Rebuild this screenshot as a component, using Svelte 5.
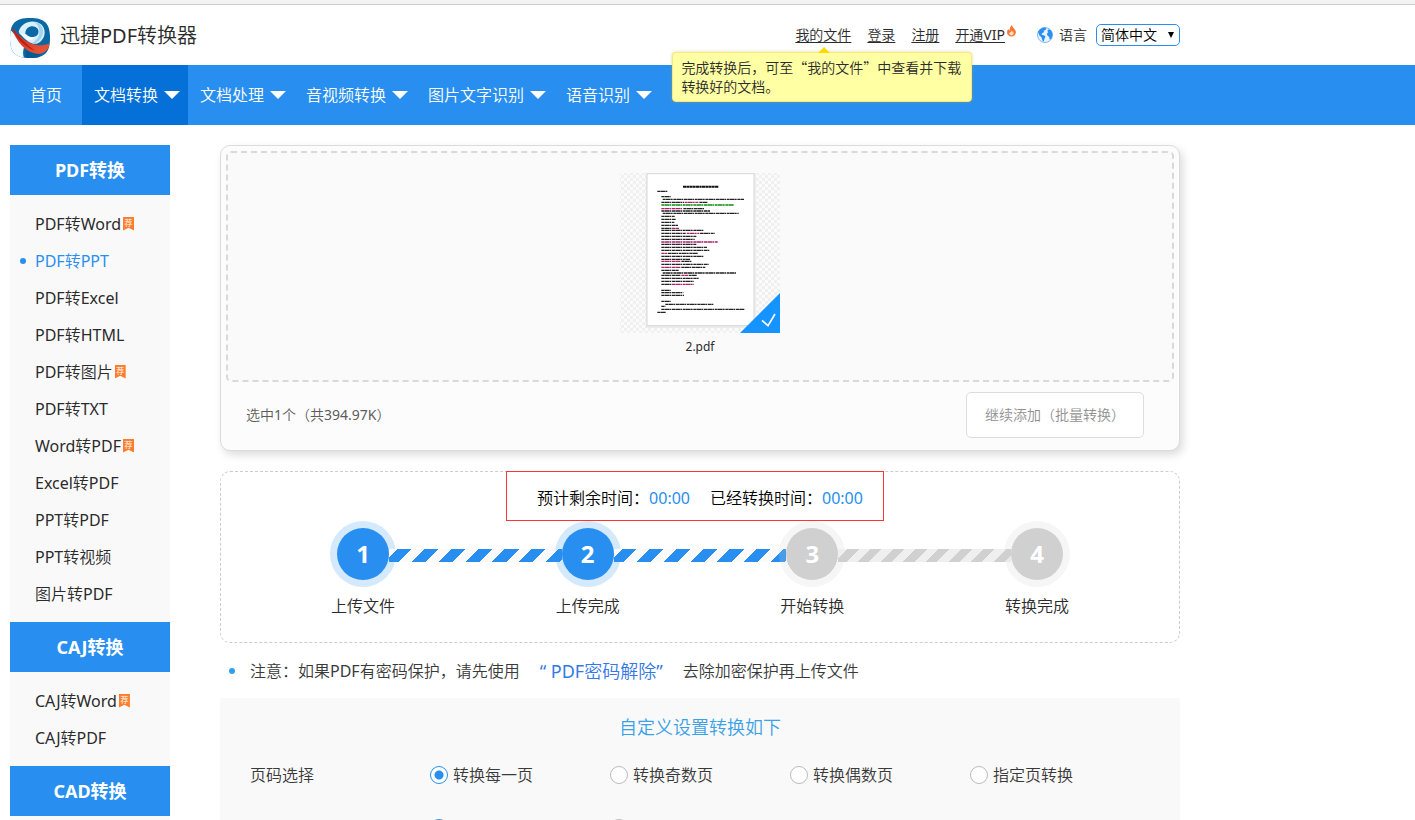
<script>
  const navItems = ['文档转换', '文档处理', '音视频转换', '图片文字识别', '语音识别'];

  const menu = [
    {
      title: 'PDF转换',
      items: [
        { name: 'PDF转Word', hot: true },
        { name: 'PDF转PPT', active: true },
        { name: 'PDF转Excel' },
        { name: 'PDF转HTML' },
        { name: 'PDF转图片', hot: true },
        { name: 'PDF转TXT' },
        { name: 'Word转PDF', hot: true },
        { name: 'Excel转PDF' },
        { name: 'PPT转PDF' },
        { name: 'PPT转视频' },
        { name: '图片转PDF' }
      ]
    },
    {
      title: 'CAJ转换',
      items: [{ name: 'CAJ转Word', hot: true }, { name: 'CAJ转PDF' }]
    },
    { title: 'CAD转换', items: [] }
  ];

  const steps = [
    { label: '上传文件', done: true },
    { label: '上传完成', done: true },
    { label: '开始转换', done: false },
    { label: '转换完成', done: false }
  ];

  const pageModes = ['转换每一页', '转换奇数页', '转换偶数页', '指定页转换'];
  const mergeModes = ['是', '否'];

  let pageMode = $state('转换每一页');
  let mergeMode = $state('是');
  let language = $state('简体中文');

  const ink = '#222';
  const red = '#b0206a';
  const green = '#128a12';

  // text lines of the thumbnail: y, x from, x to, colour
  const lines = [
    [94, 172, 204, ink], [110, 184, 212, ink], [118, 188, 432, ink],
    [127, 184, 252, ink], [127, 254, 296, red], [127, 298, 322, ink],
    [135, 184, 402, green], [146, 184, 248, red], [146, 250, 312, ink],
    [153, 184, 330, ink], [160, 188, 416, ink], [169, 184, 224, ink],
    [178, 184, 228, ink], [187, 184, 223, ink], [196, 184, 234, ink],
    [205, 184, 214, ink], [205, 216, 237, red], [211, 184, 312, ink],
    [220, 184, 258, ink], [220, 260, 298, red], [220, 300, 344, ink],
    [229, 184, 290, ink], [238, 184, 284, ink], [246, 184, 354, red],
    [253, 184, 290, ink], [262, 184, 322, ink], [271, 184, 328, ink],
    [280, 184, 202, red], [280, 204, 294, ink], [289, 184, 310, ink],
    [298, 184, 270, ink], [304, 184, 242, red], [304, 244, 276, ink],
    [313, 184, 326, ink], [322, 184, 242, red], [322, 244, 316, ink],
    [331, 184, 236, ink], [339, 188, 408, ink], [346, 184, 242, ink],
    [346, 244, 264, red], [346, 266, 290, ink], [355, 184, 296, ink],
    [364, 184, 282, ink], [373, 184, 214, ink], [373, 216, 282, red],
    [391, 184, 212, ink], [398, 184, 250, ink], [406, 184, 252, ink],
    [424, 184, 212, ink], [433, 196, 340, ink], [439, 184, 196, ink],
    [448, 184, 434, ink], [457, 172, 198, ink]
  ];
</script>

<div class="page">
  <div class="topline"></div>

  <header class="header">
    <a class="brand" href="#home">
      <svg class="logo" viewBox="0 0 120 120" aria-hidden="true">
        <defs>
          <clipPath id="badge"><path d="M60 0C104 0 120 16 120 60S104 120 60 120 0 104 0 60 16 0 60 0Z" /></clipPath>
          <linearGradient id="sash" x1="0" y1="0" x2="1" y2="1">
            <stop offset="0" stop-color="#c62a20" />
            <stop offset="1" stop-color="#ef5a38" />
          </linearGradient>
        </defs>
        <g clip-path="url(#badge)">
          <rect width="120" height="120" fill="#0a69a5" />
          <path d="M0 34L44 84C38 96 38 110 42 120H0Z" fill="#f4fbff" />
          <path d="M26 42C32 12 70 2 92 18C112 34 106 68 80 77C64 80 46 68 26 42Z" fill="#d9f0fb" />
          <path d="M72 12C98 14 108 42 92 62C84 74 72 78 64 76C94 62 96 28 72 12Z" fill="#9fd4f2" />
          <path d="M46 46C46 24 74 18 84 34C90 50 76 60 64 58L50 52Z" fill="#0a69a5" />
          <path d="M26 44L50 50C56 60 68 60 78 54C70 66 58 70 50 64Z" fill="#f4fbff" />
          <path d="M4 26C24 52 46 72 76 80C92 83 106 82 120 76C116 96 102 108 84 108C48 104 18 72 4 26Z" fill="url(#sash)" />
          <path d="M4 26C18 58 44 88 76 98C50 80 26 58 4 26Z" fill="#b52019" />
          <path d="M46 94C58 104 74 108 92 108L84 120H48Z" fill="#075a94" />
        </g>
      </svg>
      <span>迅捷PDF转换器</span>
    </a>

    <div class="account">
      <div class="files">
        <a href="#files">我的文件</a>
        <div class="tip" role="tooltip">完成转换后，可至“我的文件”中查看并下载转换好的文档。</div>
      </div>
      <a href="#login">登录</a>
      <a href="#register">注册</a>
      <div class="vip">
        <a href="#vip">开通VIP</a>
        <svg class="flame" viewBox="0 0 9 12" aria-hidden="true">
          <path d="M5 0C5 2 8 3.500 8.800 6.500C9.200 9.500 7 11.500 4.500 11.500S0 9.800 0 7.500C0 6 .6 4.800 1.400 4C1.600 4.800 2 5.200 2.600 5.400C2.600 3 3.600 1.200 5 0Z" fill="#fa7832" />
          <path d="M4.700 5.500C5.200 6.600 6.600 7 6.600 8.600C6.600 9.800 5.600 10.300 4.500 10.300S2.300 9.700 2.300 8.600C2.300 7.800 2.800 7.400 3.200 7.200C3.600 7.500 4.400 6.800 4.700 5.500Z" fill="#ffe3d2" />
        </svg>
      </div>
      <label class="language">
        <svg class="globe" viewBox="0 0 16 16" aria-hidden="true">
          <circle cx="8" cy="8" r="7.500" fill="#eaf4fe" stroke="#7dbaf5" />
          <path d="M1 5C2.500 2 5 .8 8 .6L9.500 1.800L8 3.400L6.500 3.600L7.200 5L5.200 6.200L4.600 7.800L7 8.200L8.600 9.800L7.600 11.600L6.600 14.800C5 13.500 5 11.500 4.400 10.200L2.400 8.600Z" fill="#2b8ff0" />
          <path d="M11 2.600L13.200 2.800C15 4.500 15.600 6.500 15.400 9L14 12L12.600 12.600L12.200 10L10.600 8.800L9.800 6.800L11.200 5.200L10.400 4Z" fill="#2b8ff0" />
        </svg>
        语言
        <span class="select">
          <select bind:value={language}>
            <option>简体中文</option>
            <option>English</option>
          </select>
        </span>
      </label>
    </div>
  </header>

  <nav class="nav">
    <a class="home" href="#home">首页</a>
    {#each navItems as item, i}
      <a class="drop" class:current={i === 0} href="#nav-{i}">{item}</a>
    {/each}
  </nav>

  <div class="body">
    <aside>
      {#each menu as group}
        <h2>{group.title}</h2>
        <ul>
          {#each group.items as item}
            <li class:active={item.active}>
              <a href="#{item.name}">{item.name}</a>
              {#if item.hot}<span class="hot">荐</span>{/if}
            </li>
          {/each}
        </ul>
      {/each}
    </aside>

    <main>
      <section class="upload">
        <div class="dropzone">
          <figure>
            <svg class="thumb" viewBox="60 39 480 480" role="img" aria-label="2.pdf">
              <defs>
                <pattern id="checks" width="18" height="18" patternUnits="userSpaceOnUse">
                  <rect width="18" height="18" fill="#fbfbfb" />
                  <path d="M0 0H9V9H0ZM9 9H18V18H9Z" fill="#f0f0f0" />
                </pattern>
              </defs>
              <rect x="60" y="39" width="480" height="480" fill="url(#checks)" />
              <rect x="137" y="39" width="330" height="465" fill="#ececec" />
              <rect x="141" y="41" width="321" height="456" fill="#fff" stroke="#d8d8d8" stroke-width="3" />
              <path d="M249 80H356" stroke="#111" stroke-width="6" stroke-dasharray="10 1 7 1" />
              {#each lines as [y, from, to, color]}
                <path d="M{from} {y}H{to}" stroke={color} stroke-width="4" stroke-dasharray="9 1 14 1 5 2" />
              {/each}
              <path d="M420 519L540 399V519Z" fill="#1593ff" />
              <path d="M486 481L504 497L525 462" fill="none" stroke="#fff" stroke-width="5" />
            </svg>
            <figcaption>2.pdf</figcaption>
          </figure>
        </div>
        <div class="summary">
          <span>选中1个（共394.97K）</span>
          <button type="button">继续添加（批量转换）</button>
        </div>
      </section>

      <section class="progress">
        <div class="times">
          <span>预计剩余时间：<b>00:00</b></span>
          <span>已经转换时间：<b>00:00</b></span>
        </div>
        <div class="steps">
          {#each steps as step, i}
            {#if i > 0}
              <div class="bar" class:done={steps[i - 1].done}></div>
            {/if}
            <div class="step" class:done={step.done}>
              <span class="number">{i + 1}</span>
              <span>{step.label}</span>
            </div>
          {/each}
        </div>
      </section>

      <p class="notice">
        <span>注意：如果PDF有密码保护，请先使用</span>
        <a href="#unlock">“ PDF密码解除”</a>
        <span>去除加密保护再上传文件</span>
      </p>

      <section class="options">
        <h3>自定义设置转换如下</h3>
        <div class="row" role="radiogroup" aria-label="页码选择">
          <span>页码选择</span>
          {#each pageModes as mode}
            <label><input type="radio" name="pages" value={mode} bind:group={pageMode} />{mode}</label>
          {/each}
        </div>
        <div class="row" role="radiogroup" aria-label="是否转单份">
          <span>是否转单份</span>
          {#each mergeModes as mode}
            <label><input type="radio" name="merge" value={mode} bind:group={mergeMode} />{mode}</label>
          {/each}
        </div>
      </section>
    </main>
  </div>
</div>

<style>
  :global(body) { margin: 0; background: #fff; }
  .page { height: 100vh; overflow: hidden; font: 16px/24px "Noto Sans", "Noto Sans CJK SC DemiLight", "Noto Sans CJK SC Light", "Noto Sans CJK SC", sans-serif; color: #2b2b2b; }
  a { color: inherit; text-decoration: none; }
  ul { list-style: none; margin: 0; padding: 0; }

  .topline { height: 4px; background: #f3f3f3; border-bottom: 1px solid #ccc; }
  .header { display: flex; justify-content: space-between; align-items: center; height: 60px; max-width: 1170px; padding-left: 10px; }
  .brand { display: flex; align-items: center; gap: 10px; font-size: 20px; padding-top: 5px; }
  .brand span { padding-bottom: 4px; }
  .logo { width: 40px; height: 40px; }
  .account { display: flex; align-items: center; gap: 16px; font-size: 14px; line-height: 20px; }
  .account a { text-decoration: underline; text-underline-offset: 2px; }
  .files { position: relative; }
  .tip { position: absolute; z-index: 2; top: 27px; left: -123px; width: 282px; padding: 5px 8px; border: 1px solid #fbe58c; border-radius: 4px; background: #ffffa3; font: 14px/19px "Noto Sans CJK SC DemiLight", "Noto Sans CJK SC Light", "Noto Sans CJK SC", sans-serif; box-shadow: 0 0 3px rgba(200, 180, 0, .5); }
  .tip::before { content: ''; position: absolute; top: -6px; left: 145px; border: 6px solid transparent; border-top: 0; border-bottom-color: #ffd800; }
  .vip { display: flex; gap: 2px; }
  .flame { width: 9px; height: 12px; }
  .language { display: flex; align-items: center; gap: 6px; margin-left: 5px; }
  .globe { width: 16px; height: 16px; }
  .select { position: relative; margin-left: 3px; }
  .select::after { content: ''; position: absolute; right: 6px; top: 8px; border: 3px solid transparent; border-top: 6px solid #000; border-bottom: 0; pointer-events: none; }
  select { display: block; appearance: none; width: 84px; height: 22px; padding: 0 4px; border: 1px solid #288ff0; border-radius: 5px; background: #fff; color: #000; font: inherit; line-height: 20px; }

  .nav { display: flex; height: 60px; line-height: 60px; padding-left: 10px; background: #288ff0; color: #fff; }
  .home { padding: 0 20px; }
  .drop { display: flex; align-items: center; gap: 6px; padding: 0 8px 0 12px; }
  .drop::after { content: ''; border: 8px solid transparent; border-top-color: #fff; border-bottom: 0; }
  .current { background: #0470d8; }

  .body { display: flex; align-items: flex-start; gap: 50px; max-width: 1170px; padding: 20px 0 0 10px; }
  aside { flex: none; width: 160px; background: #f9f9f9; }
  h2 { margin: 0; background: #288ff0; color: #fff; font: bold 18px/50px "Noto Sans", "Noto Sans CJK SC", sans-serif; text-align: center; }
  aside ul { padding: 10px 0; }
  li { position: relative; display: flex; align-items: center; gap: 2px; height: 37px; padding-left: 25px; }
  .active { color: #288ff0; }
  .active::before { content: ''; position: absolute; left: 10px; width: 6px; height: 6px; border-radius: 50%; background: #288ff0; }
  .hot { width: 11px; height: 14px; background: #ff7c2b; color: #fff; font-size: 8px; line-height: 12px; text-align: center; clip-path: polygon(0 0, 100% 0, 100% 100%, 50% 80%, 0 100%); }

  main { flex: 1; min-width: 0; }
  .upload { padding: 5px; border: 1px solid #dcdcdc; border-radius: 10px; background: #fcfcfc; box-shadow: 3px 4px 8px rgba(0, 0, 0, .14); }
  .dropzone { display: flex; justify-content: center; padding: 20px 0 23px; border: 2px dashed #d9d9d9; border-radius: 5px; background: #fafafa; }
  figure { margin: 0; text-align: center; }
  .thumb { display: block; width: 160px; height: 160px; }
  figcaption { padding-top: 4px; font-size: 12px; line-height: 20px; }
  .summary { display: flex; justify-content: space-between; align-items: center; padding: 10px 30px 7px 20px; color: #5c5c5c; font-size: 14px; }
  .summary button { height: 46px; padding: 0 18px; border: 1px solid #ddd; border-radius: 5px; background: #fff; color: #909090; font: inherit; }

  .progress { display: flex; flex-direction: column; margin-top: 20px; padding-bottom: 24px; border: 1px dashed #ccc; border-radius: 10px; }
  .times { display: flex; align-self: center; gap: 20px; box-sizing: border-box; height: 50px; margin: -1px 10px 0 0; padding: 0 20px 0 30px; border: 1px solid #f33; color: #000; line-height: 52px; }
  .times b { color: #288ff0; font-weight: inherit; }
  .steps { display: flex; padding: 7px 110px 0; }
  .step { display: flex; flex-direction: column; align-items: center; gap: 14px; width: 64px; white-space: nowrap; }
  .number { width: 52px; border-radius: 50%; background: #d0d0d0; box-shadow: 0 0 0 7px rgba(208, 208, 208, .2); color: #fff; font-size: 24px; font-weight: 700; line-height: 52px; text-align: center; }
  .done .number { background: #288ff0; box-shadow: 0 0 0 7px rgba(40, 143, 240, .2); }
  .bar { flex: 1; height: 13px; margin: 21px -6px 0; background: repeating-linear-gradient(135deg, #efefef 0 7px, #d0d0d0 7px 15px, #efefef 15px 16px); }
  .bar.done { background: repeating-linear-gradient(135deg, #fafafa 0 6px, #288ff0 6px 16px, #fafafa 16px 19px); }

  .notice { display: flex; align-items: center; gap: 20px; margin: 0; padding: 16px 0 15px 9px; color: #3a3a3a; }
  .notice::before { content: ''; width: 6px; height: 6px; margin-right: -5px; border-radius: 50%; background: #2ba0f3; }
  .notice a { color: #3478e5; font-size: 18px; }
  .options { padding: 17px 30px 30px; background: #f9f9f9; color: #3a3a3a; }
  h3 { margin: 0; color: #3aa1e6; font-size: 18px; font-weight: inherit; text-align: center; }
  .row { display: grid; grid-template-columns: repeat(5, 180px); padding-top: 24px; margin-bottom: 5px; }
  .row label { display: flex; align-items: center; gap: 5px; }
  .row input { appearance: none; width: 18px; height: 18px; margin: 0; border: 1px solid #bbb; border-radius: 50%; background: #fff; }
  .row input:checked { border-color: #288ff0; background: radial-gradient(#288ff0 4px, #fff 5px); }
</style>
